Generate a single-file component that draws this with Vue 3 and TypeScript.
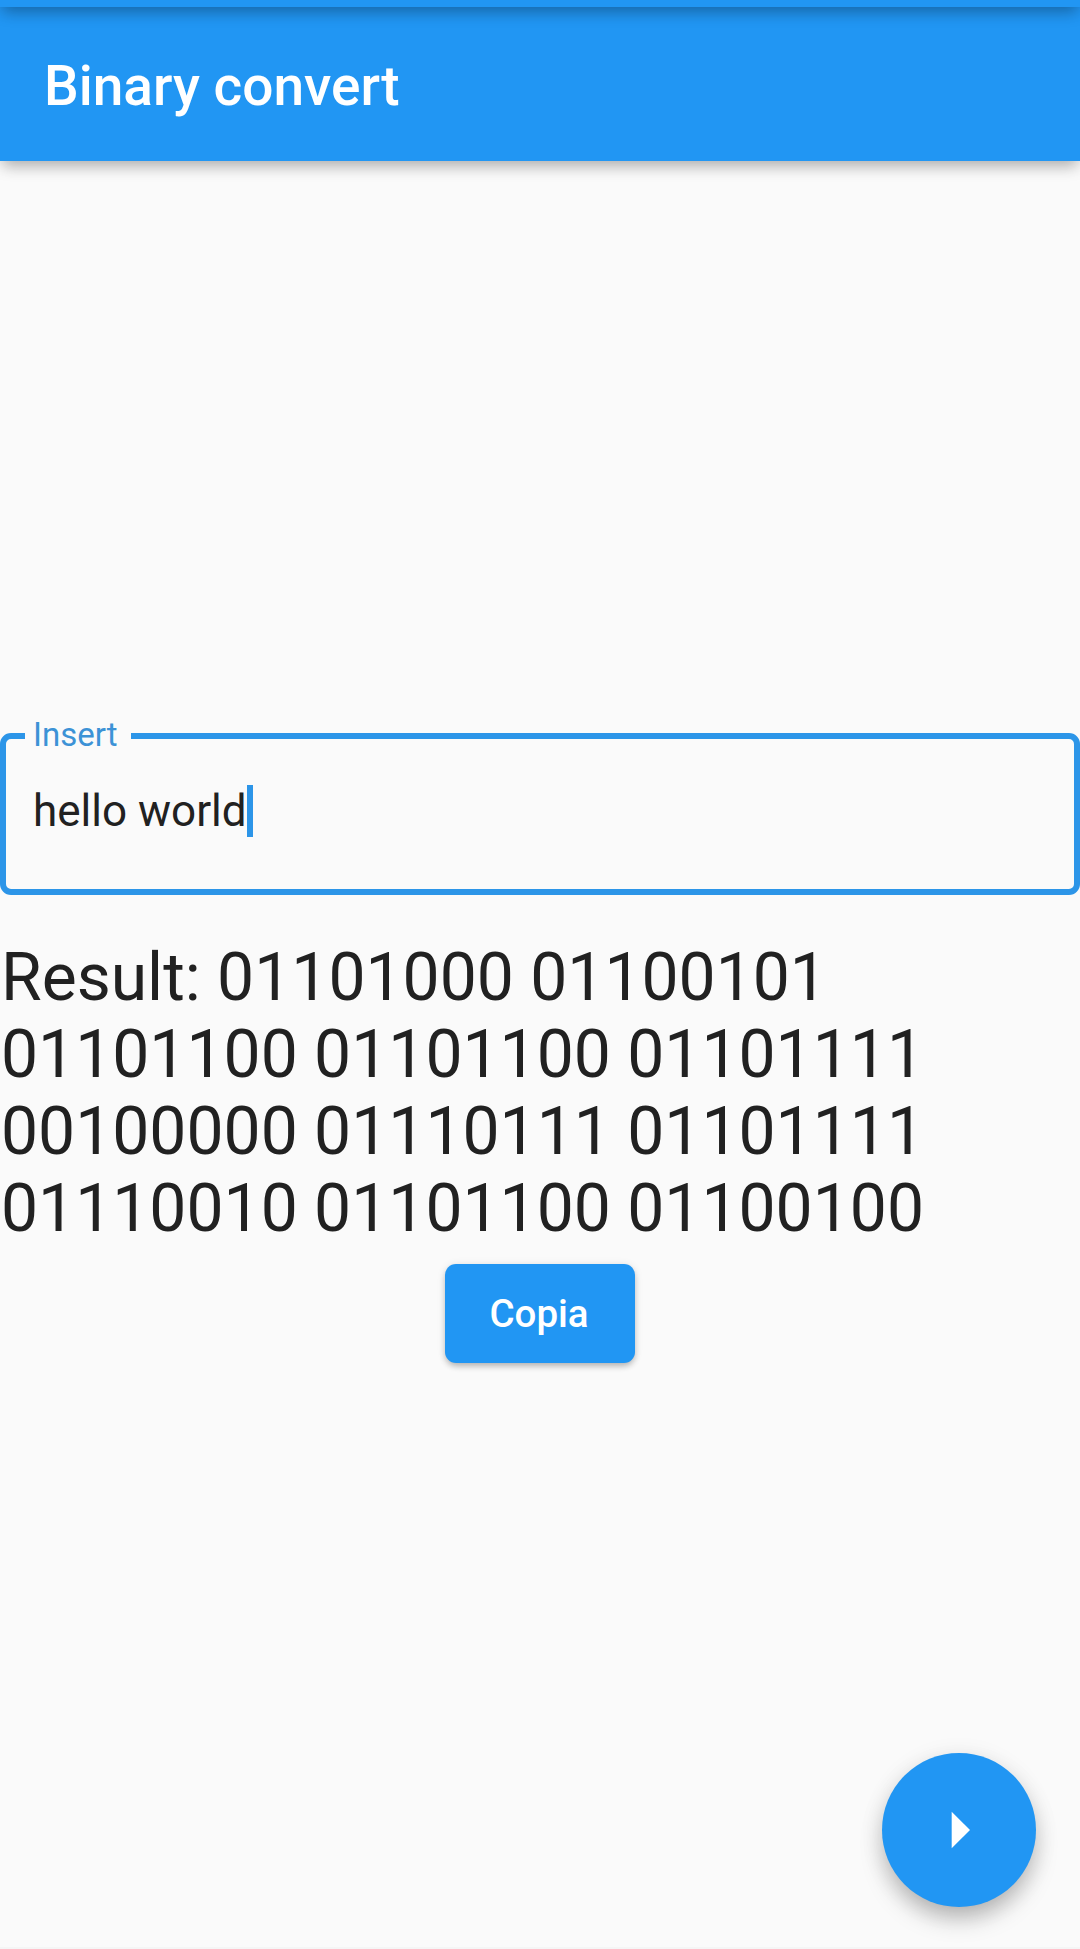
<script setup lang="ts">
import { computed, ref } from 'vue'

const text = ref('hello world')

const result = computed(() =>
  Array.from(text.value)
    .map((char) => char.charCodeAt(0).toString(2).padStart(8, '0'))
    .join(' '),
)
</script>

<template>
  <div class="screen">
    <div class="status-strip"></div>
    <header class="app-bar">
      <h1 class="title">Binary convert</h1>
    </header>
    <main class="content">
      <fieldset class="field">
        <legend class="label">Insert</legend>
        <div class="value"><span>{{ text }}</span><i class="caret"></i></div>
      </fieldset>
      <p class="result">Result: {{ result }}</p>
      <button class="copy" type="button">Copia</button>
    </main>
    <footer class="actions">
      <button class="fab" type="button" aria-label="Convert">
        <svg viewBox="0 0 24 24" width="88" height="88"><path d="M10 17l5-5-5-5v10z" fill="#fff" /></svg>
      </button>
    </footer>
    <div class="bottom-edge"></div>
  </div>
</template>

<style>
body {
  margin: 0;
  background: #fafafa;
}
</style>

<style scoped>
.screen {
  display: flex;
  flex-direction: column;
  width: 1080px;
  height: 1949px;
  overflow: hidden;
  background: #fafafa;
  font-family: Roboto, sans-serif;
  color: #212121;
}

/* Extends above the viewport so that its shadow has full strength. */
.status-strip {
  position: relative;
  z-index: 2;
  flex: none;
  height: 107px;
  margin-top: -100px;
  background: #2196f3;
  box-shadow:
    0 8px 14px -3px rgba(0, 0, 0, 0.26),
    0 3px 16px rgba(0, 0, 0, 0.08);
}

.app-bar {
  position: relative;
  z-index: 1;
  flex: none;
  display: flex;
  align-items: center;
  box-sizing: border-box;
  height: 154px;
  padding: 3px 44px 0;
  background: #2196f3;
  box-shadow:
    0 8px 14px -3px rgba(0, 0, 0, 0.26),
    0 3px 16px rgba(0, 0, 0, 0.08);
}

.title {
  margin: 0;
  font-size: 55px;
  line-height: 64px;
  font-weight: 500;
  color: #fff;
}

.content {
  flex: none;
  display: flex;
  flex-direction: column;
  align-items: center;
  padding-top: 554px;
}

.field {
  box-sizing: border-box;
  width: 1080px;
  height: 180px;
  min-width: 0;
  margin: 0;
  padding: 0 27px;
  border: 6px solid #2c95e8;
  border-radius: 11px;
}

.label {
  margin-left: -8px;
  padding: 0 13px 3px 8px;
  font-size: 33px;
  line-height: 39px;
  color: #3c92d6;
}

.value {
  display: flex;
  align-items: center;
  margin-top: 28px;
  font-size: 44px;
  line-height: 52px;
}

.caret {
  width: 6px;
  height: 52px;
  background: #2c95e8;
}

.result {
  box-sizing: border-box;
  width: 1080px;
  margin: 44px 0 0;
  padding: 0 1px;
  font-size: 66px;
  line-height: 77px;
}

.copy {
  width: 190px;
  height: 99px;
  margin-top: 17px;
  padding: 0 2px 0 0;
  border: 0;
  border-radius: 11px;
  background: #2196f3;
  box-shadow:
    0 4px 6px -1px rgba(0, 0, 0, 0.24),
    0 1px 8px rgba(0, 0, 0, 0.1);
  font: 500 38.5px/45px Roboto, sans-serif;
  color: #fff;
}

.actions {
  display: flex;
  flex: 1;
  align-items: flex-end;
  justify-content: flex-end;
  padding: 0 44px 40px 0;
}

.fab {
  display: flex;
  align-items: center;
  justify-content: center;
  width: 154px;
  height: 154px;
  padding: 0;
  border: 0;
  border-radius: 50%;
  background: #2196f3;
  box-shadow:
    0 14px 24px -3px rgba(0, 0, 0, 0.26),
    0 4px 24px rgba(0, 0, 0, 0.09);
}

.bottom-edge {
  flex: none;
  height: 2px;
  background: #f5f5f5;
}
</style>
